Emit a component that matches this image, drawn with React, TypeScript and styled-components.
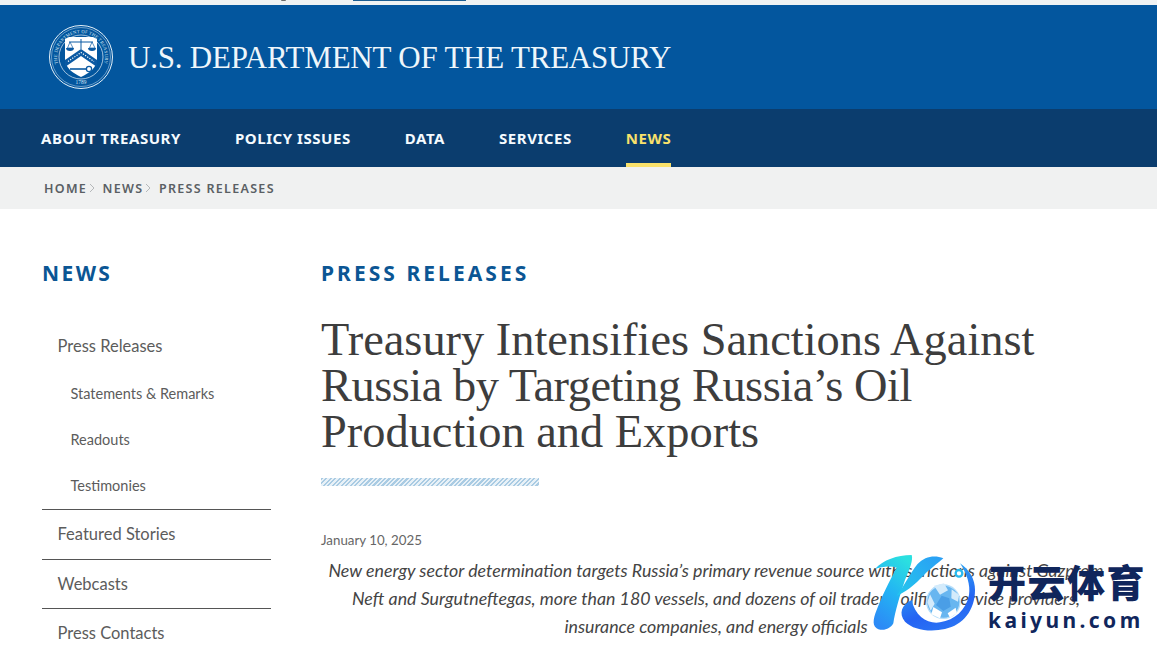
import { FC } from "react";
import styled, { createGlobalStyle } from "styled-components";

const GlobalStyle = createGlobalStyle`
	html, body {
		margin: 0;
		padding: 0;
		background: #fff;
		overflow: hidden;
	}
`;

const sans = `"Lato", "Noto Sans", sans-serif`;
const caps = `"Noto Sans", "Open Sans", sans-serif`;
const serif = `"Liberation Serif", "DejaVu Serif", serif`;

const sideItems = [
	{ label: "Press Releases", level: "top" },
	{ label: "Statements & Remarks", level: "sub" },
	{ label: "Readouts", level: "sub" },
	{ label: "Testimonies", level: "sub" },
];

const sideLinks = ["Featured Stories", "Webcasts", "Press Contacts"];

const navItems = ["ABOUT TREASURY", "POLICY ISSUES", "DATA", "SERVICES", "NEWS"];

const Seal: FC = () => (
	<svg width="66" height="66" viewBox="0 0 66 66">
		<defs>
			<path id="sealArc" d="M12.2 45 A24 24 0 1 1 53.8 45" />
		</defs>
		<circle cx="33" cy="33" r="31.5" fill="none" stroke="#e6f1f8" strokeWidth="1" />
		<circle cx="33" cy="33" r="29.5" fill="none" stroke="#cfe3f2" strokeWidth="0.5" />
		<circle cx="33" cy="33" r="22" fill="none" stroke="#e6f1f8" strokeWidth="0.7" />
		<text fontFamily="Liberation Serif, serif" fontSize="4.6" fill="#d5e7f4" letterSpacing="0.2">
			<textPath href="#sealArc" startOffset="50%" textAnchor="middle">
				THE DEPARTMENT OF THE TREASURY
			</textPath>
		</text>
		<text x="33" y="60" fontFamily="Liberation Serif, serif" fontSize="5.4" fill="#d5e7f4" textAnchor="middle">
			1789
		</text>
		<path d="M17 15 L21 13 H45 L49 15 V35 C49 44 41 49 33 53 C25 49 17 44 17 35 Z" fill="#fff" />
		<path d="M21 18 H45 M33 15 V25" fill="none" stroke="#0b5aa3" strokeWidth="1" />
		<path d="M22 18 L19.5 24 H25 Z M44 18 L41.5 24 H47 Z" fill="none" stroke="#0b5aa3" strokeWidth="0.7" />
		<path d="M18 24 A4 3 0 0 0 26 24 Z M40 24 A4 3 0 0 0 48 24 Z" fill="#0b5aa3" />
		<path d="M17 36 L33 25 L49 36 V43 L33 32 L17 43 Z" fill="#0b5aa3" />
		<path d="M20 37.5 L33 28.5 L46 37.5" fill="none" stroke="#fff" strokeWidth="1.2" strokeDasharray="1.2 1.4" />
		<path d="M22 45 H38" fill="none" stroke="#0b5aa3" strokeWidth="1.6" />
		<circle cx="41" cy="45" r="2.6" fill="none" stroke="#0b5aa3" strokeWidth="1.3" />
	</svg>
);

const KaiyunMark: FC = () => (
	<svg width="125" height="95" viewBox="0 0 375 285">
		<defs>
			<linearGradient id="kStroke" x1="0.7" y1="0" x2="0.3" y2="1">
				<stop offset="0" stopColor="#2be0e0" />
				<stop offset="0.5" stopColor="#23b4f3" />
				<stop offset="1" stopColor="#2c8af6" />
			</linearGradient>
			<linearGradient id="kArm" x1="1" y1="0" x2="0" y2="1">
				<stop offset="0" stopColor="#2a9df5" />
				<stop offset="1" stopColor="#24c8ec" />
			</linearGradient>
			<linearGradient id="kSwoosh" x1="0.2" y1="0" x2="0.6" y2="1">
				<stop offset="0" stopColor="#31bdf2" />
				<stop offset="0.7" stopColor="#2563f3" />
				<stop offset="1" stopColor="#2a74f4" />
			</linearGradient>
		</defs>
		<path
			d="M45 72 C70 45 110 30 155 30 C160 45 150 70 135 105 C120 150 105 200 100 235 C90 255 60 262 45 245 C35 230 45 205 60 170 C75 135 95 95 110 68 C90 62 65 65 45 72 Z"
			fill="url(#kStroke)"
		/>
		<path d="M250 40 C225 30 195 33 172 58 C150 85 135 120 110 152 C145 140 178 105 200 82 C218 66 236 52 250 40 Z" fill="url(#kArm)" />
		<path
			d="M155 165 C125 180 115 205 135 230 C160 255 210 262 255 252 C310 240 345 195 345 135 C345 105 330 75 300 55 C320 85 332 120 327 150 C318 195 285 225 240 232 C205 238 165 215 155 165 Z"
			fill="url(#kSwoosh)"
		/>
		<circle cx="297" cy="85" r="10" fill="#fff" stroke="#27b9ef" strokeWidth="7" />
		<circle cx="250" cy="170" r="50" fill="#68b6f0" stroke="#b6defa" strokeWidth="4" />
		<path d="M245 152 L268 160 L272 185 L250 198 L228 180 Z" fill="#4a9ee6" />
		<path d="M222 122 L252 115 L264 136 L240 149 Z M275 133 L297 150 L294 170 L274 160 Z M210 148 L224 176 L212 197 L202 172 Z" fill="#d4ebfb" />
		<path d="M220 186 L246 202 L240 220 L214 208 Z M263 205 L287 188 L290 205 L270 218 Z" fill="#fff" />
	</svg>
);

const App: FC = () => {
	return (
		<Page>
			<GlobalStyle />
			<TopSliver>
				<TopGlyph />
				<TopLink />
			</TopSliver>
			<Masthead>
				<Seal />
				<SiteTitle>U.S. DEPARTMENT OF THE TREASURY</SiteTitle>
			</Masthead>
			<NavBar>
				{navItems.map((item) => (
					<NavItem key={item} $active={item === "NEWS"}>
						{item}
					</NavItem>
				))}
			</NavBar>
			<Breadcrumbs>
				<Crumb>HOME</Crumb>
				<Chevron width="6" height="10" viewBox="0 0 6 10">
					<path d="M1 1 L5 5 L1 9" />
				</Chevron>
				<Crumb>NEWS</Crumb>
				<Chevron width="6" height="10" viewBox="0 0 6 10">
					<path d="M1 1 L5 5 L1 9" />
				</Chevron>
				<Crumb>PRESS RELEASES</Crumb>
			</Breadcrumbs>
			<Body>
				<Sidebar>
					<SideTitle>NEWS</SideTitle>
					<SideList>
						{sideItems.map((item) => (
							<SideItem key={item.label} $sub={item.level === "sub"}>
								{item.label}
							</SideItem>
						))}
						{sideLinks.map((link) => (
							<SideLink key={link}>{link}</SideLink>
						))}
					</SideList>
				</Sidebar>
				<Main>
					<Eyebrow>PRESS RELEASES</Eyebrow>
					<Headline>
						Treasury Intensifies Sanctions Against
						<br />
						<TightLine>Russia by Targeting Russia’s Oil</TightLine>
						<br />
						Production and Exports
					</Headline>
					<Stripe />
					<DateLine>January 10, 2025</DateLine>
					<Lede>
						New energy sector determination targets Russia’s primary revenue source with sanctions against Gazprom
						<br />
						Neft and Surgutneftegas, more than 180 vessels, and dozens of oil traders, oilfield service providers,
						<br />
						insurance companies, and energy officials
					</Lede>
				</Main>
			</Body>
			<Watermark>
				<KaiyunMark />
				<WatermarkText>
					<WatermarkCn>开云体育</WatermarkCn>
					<WatermarkEn>kaiyun.com</WatermarkEn>
				</WatermarkText>
			</Watermark>
		</Page>
	);
};

export default App;

const Page = styled.div`
	position: relative;
	width: 1157px;
	height: 653px;
	overflow: hidden;
	font-family: ${sans};
`;

const TopSliver = styled.div`
	height: 5px;
	background: #eff2f3;
	display: flex;
	align-items: flex-start;
	padding-left: 281px;
`;

const TopGlyph = styled.div`
	width: 5px;
	height: 1px;
	background: #6b6b6b;
	border-radius: 0 0 3px 3px;
`;

const TopLink = styled.div`
	width: 113px;
	height: 1px;
	margin-left: 67px;
	background: #1b5d92;
`;

const Masthead = styled.header`
	height: 104px;
	background: #03569e;
	display: flex;
	align-items: center;
	gap: 14px;
	padding-left: 48px;
`;

const SiteTitle = styled.div`
	font-family: ${serif};
	font-size: 31px;
	letter-spacing: -0.22px;
	color: #eef6fb;
	padding-top: 2px;
`;

const NavBar = styled.nav`
	height: 58px;
	background: #0b3d6e;
	display: flex;
	gap: 54px;
	padding-left: 41px;
	font-family: ${caps};
`;

const NavItem = styled.div<{ $active?: boolean }>`
	display: flex;
	align-items: center;
	font-size: 15px;
	font-weight: 700;
	letter-spacing: 0.55px;
	color: ${(p) => (p.$active ? "#f9e16b" : "#f5fbff")};
	border-bottom: 4px solid ${(p) => (p.$active ? "#f9e16b" : "transparent")};
	padding-top: 4px;
`;

const Breadcrumbs = styled.div`
	height: 42px;
	background: #f0f1f1;
	display: flex;
	align-items: center;
	padding-left: 44px;
	font-family: ${caps};
`;

const Crumb = styled.span`
	font-size: 12.5px;
	font-weight: 600;
	letter-spacing: 1.3px;
	color: #5a5f64;
`;

const Chevron = styled.svg`
	margin: 0 7.5px 0 2px;
	fill: none;
	stroke: #b5b8ba;
	stroke-width: 1;
`;

const Body = styled.div`
	display: flex;
	padding: 49px 0 0 42px;
	gap: 50px;
`;

const Sidebar = styled.aside`
	width: 229px;
	flex-shrink: 0;
`;

const SideTitle = styled.div`
	font-family: ${caps};
	font-size: 21px;
	font-weight: 700;
	letter-spacing: 2.4px;
	color: #0b5694;
	line-height: 30px;
`;

const SideList = styled.div`
	margin-top: 34px;
	display: flex;
	flex-direction: column;
`;

const SideItem = styled.div<{ $sub?: boolean }>`
	color: #5c5c5c;
	font-size: ${(p) => (p.$sub ? "14.5px" : "16.5px")};
	padding-left: ${(p) => (p.$sub ? "28.5px" : "15.5px")};
	height: ${(p) => (p.$sub ? "46.2px" : "48.5px")};
	line-height: ${(p) => (p.$sub ? "45px" : "48px")};
`;

const SideLink = styled.div`
	color: #5c5c5c;
	font-size: 16.5px;
	padding-left: 15.5px;
	height: 48.5px;
	line-height: 49px;
	border-top: 1px solid #555;
`;

const Main = styled.main`
	width: 790px;
	flex-shrink: 0;
`;

const Eyebrow = styled.div`
	font-family: ${caps};
	font-size: 21px;
	font-weight: 700;
	letter-spacing: 3.05px;
	color: #0b5694;
	line-height: 30px;
`;

const Headline = styled.h1`
	margin: 29px 0 0;
	font-family: ${serif};
	font-weight: 400;
	font-size: 46.4px;
	line-height: 46px;
	color: #3d3d3d;
`;

const TightLine = styled.span`
	letter-spacing: -0.47px;
`;

const Stripe = styled.div`
	width: 218px;
	height: 8px;
	margin-top: 23px;
	background: repeating-linear-gradient(135deg, #a9cbe3 0 1.6px, #e8f1f7 1.6px 3.2px);
`;

const DateLine = styled.div`
	margin-top: 45px;
	font-size: 13.3px;
	color: #666;
	line-height: 18px;
`;

const Lede = styled.p`
	margin: 7px 0 0;
	text-align: center;
	font-size: 17.8px;
	font-style: italic;
	line-height: 28px;
	color: #444;
	white-space: nowrap;
`;

const Watermark = styled.div`
	position: absolute;
	left: 860px;
	top: 545px;
	display: flex;
	align-items: flex-start;
	gap: 3px;
`;

const WatermarkText = styled.div`
	display: flex;
	flex-direction: column;
	align-items: flex-start;
	margin-top: 16px;
`;

const WatermarkCn = styled.div`
	font-family: "Noto Sans CJK SC", sans-serif;
	font-size: 38px;
	font-weight: 900;
	line-height: 40px;
	letter-spacing: 1.5px;
	color: #10265c;
`;

const WatermarkEn = styled.div`
	font-family: ${caps};
	font-size: 21px;
	font-weight: 700;
	line-height: 26px;
	letter-spacing: 3.4px;
	color: #10265c;
	margin-top: 6px;
`;
